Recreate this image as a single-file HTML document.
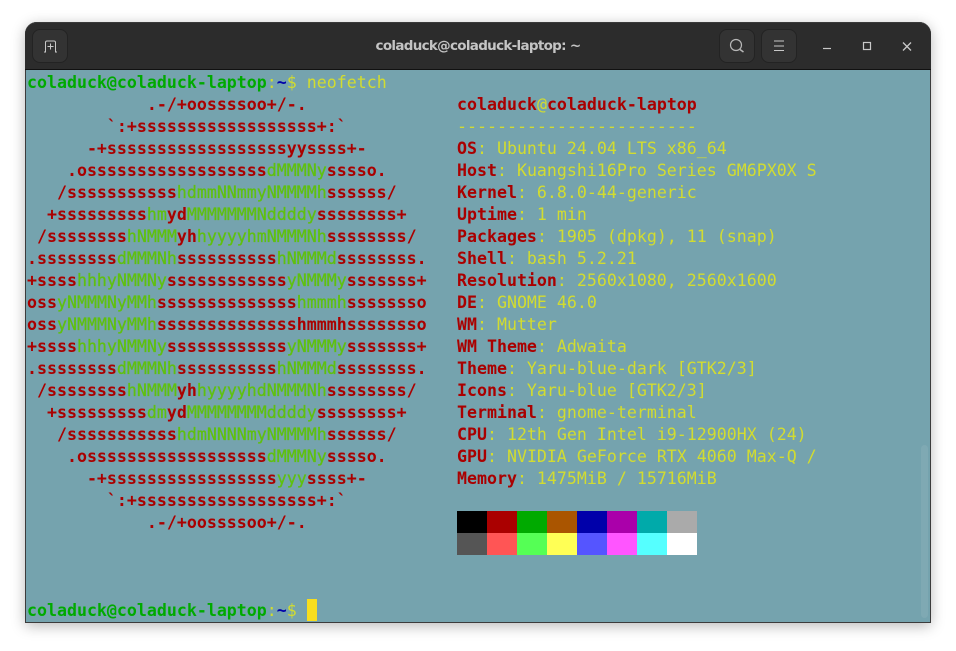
<!DOCTYPE html>
<html><head><meta charset="utf-8"><style>
html,body{margin:0;padding:0;background:#fff;width:956px;height:651px;overflow:hidden}
#w{position:absolute;left:25px;top:22px;width:904px;height:600px;border:1px solid #3c3c3c;border-top:0;border-radius:12px 12px 0 0;box-shadow:0 3px 14px rgba(0,0,0,.28);background:#75a3ae}
.b{position:absolute;top:7px;width:34px;height:32px;background:#333;border:1px solid #232323;border-radius:8px}
svg{position:absolute;left:0;top:0}
#x{position:absolute;left:0;top:0;width:956px;height:651px}
.l{position:absolute;white-space:pre;height:22px;margin-top:1px;line-height:22px;font-family:"DejaVu Sans Mono","Liberation Mono",monospace;font-size:16.6px;color:#d2dc30;letter-spacing:0}
b{font-weight:bold;color:#aa0000}
i{font-style:normal;font-weight:normal;color:#5fc010;-webkit-text-stroke:.3px #5fc010}
u{text-decoration:none;font-weight:bold;color:#00aa00}
em{font-style:normal;font-weight:bold;color:#0000aa}
.c{position:absolute;width:30px;height:22px}
</style></head><body>
<div id="w"></div>
<div id="x">
<div style="position:absolute;left:25px;top:22px;width:906px;height:48px;background:#2c2c2c;border-radius:12px 12px 0 0;border-bottom:1px solid #111;box-sizing:border-box;box-shadow:inset 0 1px 0 #3a3a3a"></div>
<div class="b" style="left:32px;top:29px"></div>
<div class="b" style="left:719px;top:29px"></div>
<div class="b" style="left:761px;top:29px"></div>
<div style="position:absolute;left:25px;top:33px;width:906px;text-align:center;font:bold 13.5px/26px 'DejaVu Sans','Liberation Sans',sans-serif;color:#c4c4c4;letter-spacing:-.7px">coladuck@coladuck-laptop: ~</div>
<svg width="956" height="651" fill="none" stroke="#c8c8c8" stroke-width="1.2">
<path d="M44 52h1.500V42.500q0-1.500 1.500-1.500h7q1.500 0 1.500 1.500V52H57M50.500 43.500v6M47.500 46.500h6" stroke-width="1"/>
<circle cx="736" cy="45" r="5.500" stroke="#b8b8b8"/><path d="M740 49.500l3.500 2.500" stroke="#b8b8b8" stroke-width="1.500"/>
<path d="M774 41h10M774 46h10M774 50.500h10" stroke-width="1.100"/>
<path d="M823 48.500h8" stroke-width="1.200"/>
<rect x="863.500" y="42.500" width="7" height="7" stroke-width="1.200"/>
<path d="M903 42.500l8 8M911 42.500l-8 8" stroke-width="1.300"/>
</svg>
<div style="position:absolute;left:921px;top:445px;width:7px;height:173px;background:#7fa9b3;border-radius:4px"></div>

<div class="l" style="left:27px;top:71px"><u>coladuck@coladuck-laptop</u>:<em>~</em>$ neofetch</div>
<div class="l" style="left:27px;top:93px"><b>            .-/+oossssoo+/-.</b></div>
<div class="l" style="left:27px;top:115px"><b>        `:+ssssssssssssssssss+:`</b></div>
<div class="l" style="left:27px;top:137px"><b>      -+ssssssssssssssssssyyssss+-</b></div>
<div class="l" style="left:27px;top:159px"><b>    .ossssssssssssssssss</b><i>dMMMNy</i><b>sssso.</b></div>
<div class="l" style="left:27px;top:181px"><b>   /sssssssssss</b><i>hdmmNNmmyNMMMMh</i><b>ssssss/</b></div>
<div class="l" style="left:27px;top:203px"><b>  +sssssssss</b><i>hm</i><b>yd</b><i>MMMMMMMNddddy</i><b>ssssssss+</b></div>
<div class="l" style="left:27px;top:225px"><b> /ssssssss</b><i>hNMMM</i><b>yh</b><i>hyyyyhmNMMMNh</i><b>ssssssss/</b></div>
<div class="l" style="left:27px;top:247px"><b>.ssssssss</b><i>dMMMNh</i><b>ssssssssss</b><i>hNMMMd</i><b>ssssssss.</b></div>
<div class="l" style="left:27px;top:269px"><b>+ssss</b><i>hhhyNMMNy</i><b>ssssssssssss</b><i>yNMMMy</i><b>sssssss+</b></div>
<div class="l" style="left:27px;top:291px"><b>oss</b><i>yNMMMNyMMh</i><b>ssssssssssssss</b><i>hmmmh</i><b>ssssssso</b></div>
<div class="l" style="left:27px;top:313px"><b>oss</b><i>yNMMMNyMMh</i><b>sssssssssssssshmmmhssssssso</b></div>
<div class="l" style="left:27px;top:335px"><b>+ssss</b><i>hhhyNMMNy</i><b>ssssssssssss</b><i>yNMMMy</i><b>sssssss+</b></div>
<div class="l" style="left:27px;top:357px"><b>.ssssssss</b><i>dMMMNh</i><b>ssssssssss</b><i>hNMMMd</i><b>ssssssss.</b></div>
<div class="l" style="left:27px;top:379px"><b> /ssssssss</b><i>hNMMM</i><b>yh</b><i>hyyyyhdNMMMNh</i><b>ssssssss/</b></div>
<div class="l" style="left:27px;top:401px"><b>  +sssssssss</b><i>dm</i><b>yd</b><i>MMMMMMMMddddy</i><b>ssssssss+</b></div>
<div class="l" style="left:27px;top:423px"><b>   /sssssssssss</b><i>hdmNNNNmyNMMMMh</i><b>ssssss/</b></div>
<div class="l" style="left:27px;top:445px"><b>    .ossssssssssssssssss</b><i>dMMMNy</i><b>sssso.</b></div>
<div class="l" style="left:27px;top:467px"><b>      -+sssssssssssssssss</b><i>yyy</i><b>ssss+-</b></div>
<div class="l" style="left:27px;top:489px"><b>        `:+ssssssssssssssssss+:`</b></div>
<div class="l" style="left:27px;top:511px"><b>            .-/+oossssoo+/-.</b></div>

<div class="l" style="left:457px;top:93px"><b>coladuck</b>@<b>coladuck-laptop</b></div>
<div class="l" style="left:457px;top:115px">------------------------</div>
<div class="l" style="left:457px;top:137px"><b>OS</b>: Ubuntu 24.04 LTS x86_64</div>
<div class="l" style="left:457px;top:159px"><b>Host</b>: Kuangshi16Pro Series GM6PX0X S</div>
<div class="l" style="left:457px;top:181px"><b>Kernel</b>: 6.8.0-44-generic</div>
<div class="l" style="left:457px;top:203px"><b>Uptime</b>: 1 min</div>
<div class="l" style="left:457px;top:225px"><b>Packages</b>: 1905 (dpkg), 11 (snap)</div>
<div class="l" style="left:457px;top:247px"><b>Shell</b>: bash 5.2.21</div>
<div class="l" style="left:457px;top:269px"><b>Resolution</b>: 2560x1080, 2560x1600</div>
<div class="l" style="left:457px;top:291px"><b>DE</b>: GNOME 46.0</div>
<div class="l" style="left:457px;top:313px"><b>WM</b>: Mutter</div>
<div class="l" style="left:457px;top:335px"><b>WM Theme</b>: Adwaita</div>
<div class="l" style="left:457px;top:357px"><b>Theme</b>: Yaru-blue-dark [GTK2/3]</div>
<div class="l" style="left:457px;top:379px"><b>Icons</b>: Yaru-blue [GTK2/3]</div>
<div class="l" style="left:457px;top:401px"><b>Terminal</b>: gnome-terminal</div>
<div class="l" style="left:457px;top:423px"><b>CPU</b>: 12th Gen Intel i9-12900HX (24)</div>
<div class="l" style="left:457px;top:445px"><b>GPU</b>: NVIDIA GeForce RTX 4060 Max-Q /</div>
<div class="l" style="left:457px;top:467px"><b>Memory</b>: 1475MiB / 15716MiB</div>

<div class="c" style="left:457px;top:511px;background:#000"></div>
<div class="c" style="left:487px;top:511px;background:#aa0000"></div>
<div class="c" style="left:517px;top:511px;background:#00aa00"></div>
<div class="c" style="left:547px;top:511px;background:#aa5500"></div>
<div class="c" style="left:577px;top:511px;background:#0000aa"></div>
<div class="c" style="left:607px;top:511px;background:#aa00aa"></div>
<div class="c" style="left:637px;top:511px;background:#00aaaa"></div>
<div class="c" style="left:667px;top:511px;background:#aaaaaa"></div>
<div class="c" style="left:457px;top:533px;background:#555555"></div>
<div class="c" style="left:487px;top:533px;background:#ff5555"></div>
<div class="c" style="left:517px;top:533px;background:#55ff55"></div>
<div class="c" style="left:547px;top:533px;background:#ffff55"></div>
<div class="c" style="left:577px;top:533px;background:#5555ff"></div>
<div class="c" style="left:607px;top:533px;background:#ff55ff"></div>
<div class="c" style="left:637px;top:533px;background:#55ffff"></div>
<div class="c" style="left:667px;top:533px;background:#ffffff"></div>

<div class="l" style="left:27px;top:599px"><u>coladuck@coladuck-laptop</u>:<em>~</em>$</div>
<div style="position:absolute;left:307px;top:599px;width:10px;height:22px;background:#f8de1e"></div>
</div>
</body></html>
